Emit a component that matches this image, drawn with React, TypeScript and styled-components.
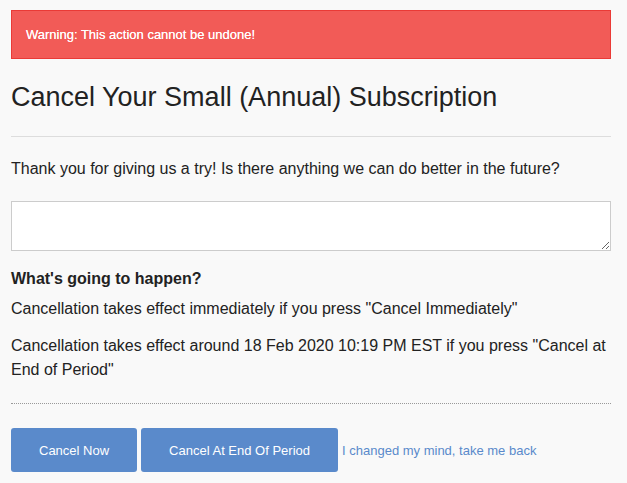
import React from "react";
import styled, { createGlobalStyle } from "styled-components";

const Global = createGlobalStyle`
  html, body {
    margin: 0;
    padding: 0;
    background: #f9f9f9;
  }
  body {
    font-family: "Liberation Sans", Arial, sans-serif;
    color: #222;
  }
`;

const Page = styled.div`
  width: 600px;
  padding: 10px 16px 0 11px;
`;

const Alert = styled.div`
  background: #f25b57;
  border: 1px solid #ea3a36;
  color: #fff;
  font-size: 13px;
  line-height: 15px;
  padding: 16px 14px;
  text-shadow: 0 0 0.4px rgba(255, 255, 255, 0.9);
`;

const Title = styled.h1`
  margin: 23px 0 0;
  font-size: 27px;
  line-height: 30px;
  font-weight: normal;
  color: #222;
`;

const Rule = styled.hr<{ $dotted?: boolean; $top: number }>`
  margin: ${(p) => p.$top}px 0 0;
  border: 0;
  border-top: 1px ${(p) => (p.$dotted ? "dotted #999" : "solid #ddd")};
`;

const Text = styled.p<{ $top: number; $bold?: boolean }>`
  margin: ${(p) => p.$top}px 0 0;
  font-size: 16px;
  line-height: 24px;
  font-weight: ${(p) => (p.$bold ? "bold" : "normal")};
`;

const Feedback = styled.textarea`
  display: block;
  box-sizing: border-box;
  width: 600px;
  height: 50px;
  margin: 20px 0 0;
  border: 1px solid #ccc;
  background: #fff;
  font-family: inherit;
  font-size: 14px;
  padding: 6px;
`;

const Actions = styled.div`
  display: flex;
  align-items: center;
  gap: 4px;
  margin-top: 24px;
`;

const Button = styled.button`
  height: 44px;
  padding: 0 28px;
  border: 0;
  border-radius: 3px;
  background: #5a8acb;
  color: #fff;
  font-family: inherit;
  font-size: 13px;
  cursor: pointer;
`;

const BackLink = styled.a`
  color: #5a8acb;
  font-size: 13px;
  text-decoration: none;
`;

export default function App() {
  return (
    <Page>
      <Global />
      <Alert>Warning: This action cannot be undone!</Alert>
      <Title>Cancel Your Small (Annual) Subscription</Title>
      <Rule $top={24} />
      <Text $top={20}>
        Thank you for giving us a try! Is there anything we can do better in the future?
      </Text>
      <Feedback />
      <Text $top={16} $bold>What's going to happen?</Text>
      <Text $top={6}>Cancellation takes effect immediately if you press "Cancel Immediately"</Text>
      <Text $top={13}>
        Cancellation takes effect around 18 Feb 2020 10:19 PM EST if you press "Cancel at End of
        Period"
      </Text>
      <Rule $dotted $top={21} />
      <Actions>
        <Button>Cancel Now</Button>
        <Button>Cancel At End Of Period</Button>
        <BackLink href="#">I changed my mind, take me back</BackLink>
      </Actions>
    </Page>
  );
}
